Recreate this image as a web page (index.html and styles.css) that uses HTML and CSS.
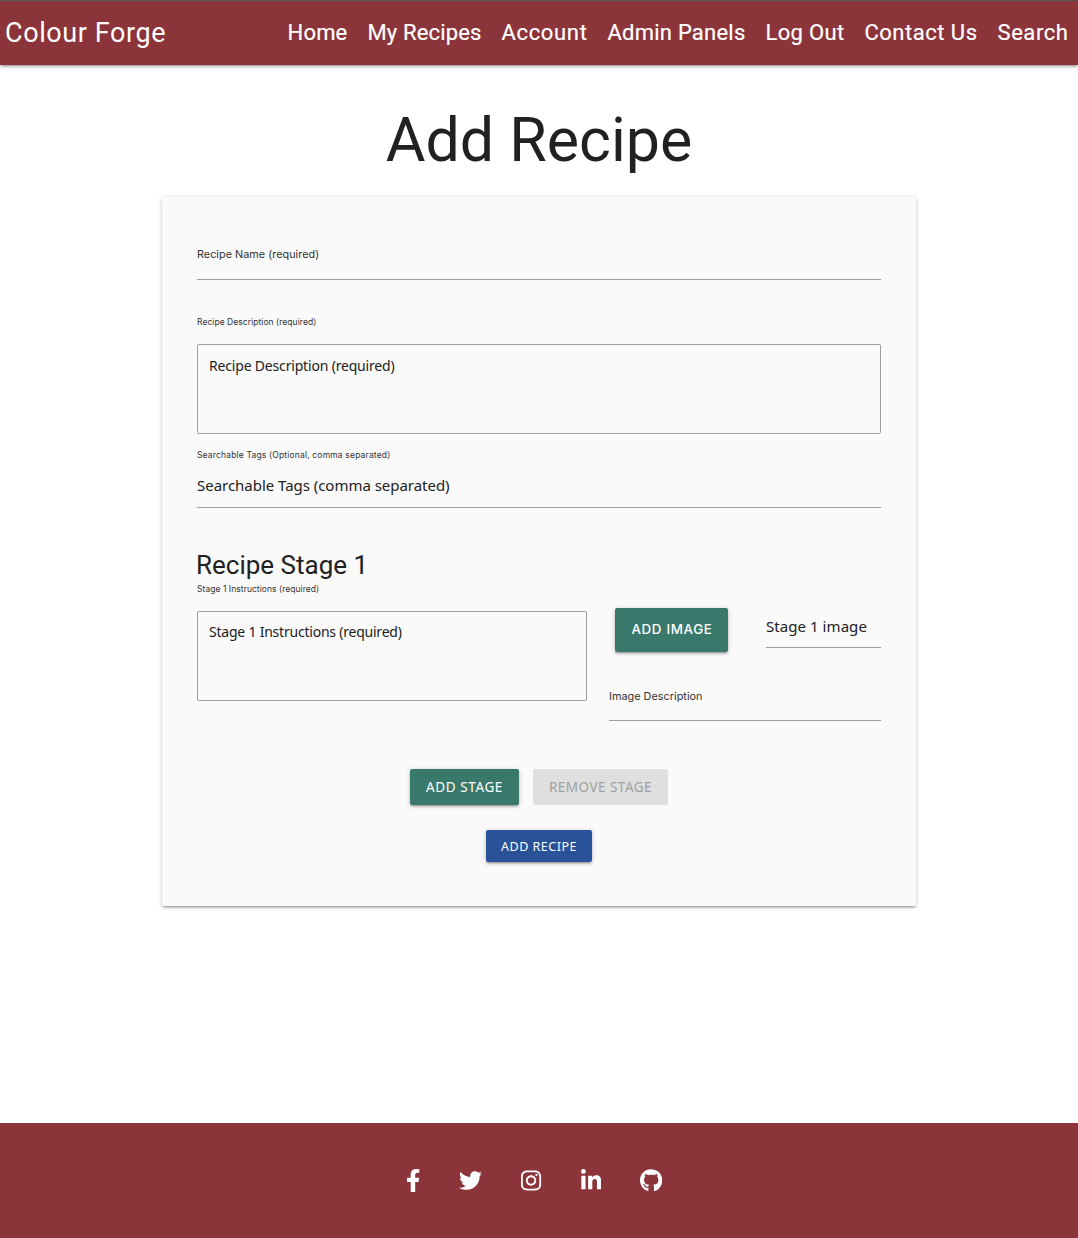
FILE: index.html
```html
<!DOCTYPE html>
<html lang="en">
<head>
<meta charset="utf-8">
<title>Colour Forge - Add Recipe</title>
<link rel="stylesheet" href="styles.css">
</head>
<body>
<header class="navbar">
  <a class="brand">Colour Forge</a>
  <nav class="nav-links">
    <a class="nav-home">Home</a>
    <a class="nav-recipes">My Recipes</a>
    <a class="nav-account">Account</a>
    <a class="nav-admin">Admin Panels</a>
    <a class="nav-logout">Log Out</a>
    <a class="nav-contact">Contact Us</a>
    <a class="nav-search">Search</a>
  </nav>
</header>
<main>
  <h1 class="page-title">Add Recipe</h1>
  <form class="card">
    <div class="field field-name"><label class="label">Recipe Name (required)</label></div>
    <label class="small-label label-desc">Recipe Description (required)</label>
    <div class="textarea textarea-desc">Recipe Description (required)</div>
    <label class="small-label label-tags">Searchable Tags (Optional, comma separated)</label>
    <div class="field field-tags">Searchable Tags (comma separated)</div>
    <h2 class="stage-title">Recipe Stage 1</h2>
    <div class="stage">
      <div class="stage-text">
        <label class="small-label label-stage">Stage 1 Instructions (required)</label>
        <div class="textarea">Stage 1 Instructions (required)</div>
      </div>
      <div class="stage-image">
        <div class="file-row">
          <button type="button" class="btn btn-file">ADD IMAGE</button>
          <div class="field field-file">Stage 1 image</div>
        </div>
        <div class="field field-alt"><label class="label">Image Description</label></div>
      </div>
    </div>
    <div class="actions">
      <button type="button" class="btn btn-add">ADD STAGE</button>
      <button type="button" class="btn btn-remove" disabled>REMOVE STAGE</button>
    </div>
    <div class="actions submit">
      <button type="button" class="btn btn-submit">ADD RECIPE</button>
    </div>
  </form>
</main>
<footer class="footer">
  <svg class="icon icon-facebook" viewBox="0 0 320 512"><path d="M279.14 288l14.22-92.66h-88.91v-60.13c0-25.35 12.42-50.06 52.24-50.06h40.42V6.26S260.43 0 225.36 0c-73.22 0-121.08 44.38-121.08 124.72v70.62H22.89V288h81.39v224h100.17V288z"/></svg>
  <svg class="icon icon-twitter" viewBox="0 0 512 512"><path d="M459.37 151.716c.325 4.548.325 9.097.325 13.645 0 138.72-105.583 298.558-298.558 298.558-59.452 0-114.68-17.219-161.137-47.106 8.447.974 16.568 1.299 25.34 1.299 49.055 0 94.213-16.568 130.274-44.832-46.132-.975-84.792-31.188-98.112-72.772 6.498.974 12.995 1.624 19.818 1.624 9.421 0 18.843-1.3 27.614-3.573-48.081-9.747-84.143-51.98-84.143-102.985v-1.299c13.969 7.797 30.214 12.67 47.431 13.319-28.264-18.843-46.781-51.005-46.781-87.391 0-19.492 5.197-37.36 14.294-52.954 51.655 63.675 129.3 105.258 216.365 109.807-1.624-7.797-2.599-15.918-2.599-24.04 0-57.828 46.782-104.934 104.934-104.934 30.213 0 57.502 12.67 76.67 33.137 23.715-4.548 46.456-13.32 66.599-25.34-7.798 24.366-24.366 44.833-46.132 57.827 21.117-2.273 41.584-8.122 60.426-16.243-14.292 20.791-32.161 39.308-52.628 54.253z"/></svg>
  <svg class="icon icon-instagram" viewBox="0 0 448 512"><path d="M224.1 141c-63.6 0-114.9 51.3-114.9 114.9s51.3 114.9 114.9 114.9S339 319.5 339 255.9 287.7 141 224.1 141zm0 189.6c-41.1 0-74.7-33.5-74.7-74.7s33.5-74.7 74.7-74.7 74.7 33.5 74.7 74.7-33.6 74.7-74.7 74.7zm146.4-194.3c0 14.9-12 26.8-26.8 26.8-14.9 0-26.8-12-26.8-26.8s12-26.8 26.8-26.8 26.8 12 26.8 26.8zm76.1 27.2c-1.7-35.9-9.9-67.7-36.2-93.9-26.2-26.2-58-34.4-93.9-36.2-37-2.1-147.9-2.1-184.9 0-35.8 1.7-67.6 9.9-93.9 36.1s-34.4 58-36.2 93.9c-2.1 37-2.1 147.9 0 184.9 1.7 35.9 9.9 67.7 36.2 93.9s58 34.4 93.9 36.2c37 2.1 147.9 2.1 184.9 0 35.9-1.7 67.7-9.9 93.9-36.2 26.2-26.2 34.4-58 36.2-93.9 2.1-37 2.1-147.8 0-184.8zM398.8 388c-7.8 19.6-22.9 34.7-42.6 42.6-29.5 11.7-99.5 9-132.1 9s-102.7 2.6-132.1-9c-19.6-7.8-34.7-22.9-42.6-42.6-11.7-29.5-9-99.5-9-132.1s-2.6-102.7 9-132.1c7.8-19.6 22.9-34.7 42.6-42.6 29.5-11.7 99.5-9 132.1-9s102.7-2.6 132.1 9c19.6 7.8 34.7 22.9 42.6 42.6 11.7 29.5 9 99.5 9 132.1s2.7 102.7-9 132.1z"/></svg>
  <svg class="icon icon-linkedin" viewBox="0 0 448 512"><path d="M100.28 448H7.4V148.9h92.88zM53.79 108.1C24.09 108.1 0 83.5 0 53.8a53.79 53.79 0 0 1 107.58 0c0 29.7-24.1 54.3-53.79 54.3zM447.9 448h-92.68V302.4c0-34.7-.7-79.2-48.29-79.2-48.29 0-55.69 37.7-55.69 76.7V448h-92.78V148.9h89.08v40.8h1.3c12.4-23.5 42.69-48.3 87.88-48.3 94 0 111.28 61.9 111.28 142.3V448z"/></svg>
  <svg class="icon icon-github" viewBox="0 0 496 512"><path d="M165.9 397.4c0 2-2.3 3.6-5.2 3.6-3.3.3-5.6-1.3-5.6-3.6 0-2 2.3-3.6 5.2-3.6 3-.3 5.6 1.3 5.6 3.6zm-31.1-4.5c-.7 2 1.3 4.3 4.3 4.9 2.6 1 5.6 0 6.2-2s-1.3-4.3-4.3-5.2c-2.6-.7-5.5.3-6.2 2.3zm44.2-1.7c-2.9.7-4.9 2.6-4.6 4.9.3 2 2.9 3.3 5.9 2.6 2.9-.7 4.9-2.6 4.6-4.6-.3-1.9-3-3.2-5.9-2.9zM244.8 8C106.1 8 0 113.3 0 252c0 110.9 69.8 205.8 169.5 239.2 12.8 2.3 17.3-5.6 17.3-12.1 0-6.2-.3-40.4-.3-61.4 0 0-70 15-84.7-29.8 0 0-11.4-29.1-27.8-36.6 0 0-22.9-15.7 1.6-15.4 0 0 24.9 2 38.6 25.8 21.9 38.6 58.6 27.5 72.9 20.9 2.3-16 8.8-27.1 16-33.7-55.9-6.2-112.3-14.3-112.3-110.5 0-27.5 7.6-41.3 23.6-58.9-2.6-6.5-11.1-33.3 2.6-67.9 20.9-6.5 69 27 69 27 20-5.6 41.5-8.5 62.8-8.5s42.8 2.9 62.8 8.5c0 0 48.1-33.6 69-27 13.7 34.7 5.2 61.4 2.6 67.9 16 17.7 25.8 31.5 25.8 58.9 0 96.5-58.9 104.2-114.8 110.5 9.2 7.9 17 22.9 17 46.4 0 33.7-.3 75.4-.3 83.6 0 6.5 4.6 14.4 17.3 12.1C428.2 457.8 496 362.9 496 252 496 113.3 383.5 8 244.8 8z"/></svg>
</footer>
</body>
</html>
```
FILE: styles.css
```css
* { box-sizing: border-box; }

body {
  margin: 0;
  min-height: 1238px;
  display: flex;
  flex-direction: column;
  background: #fff;
  color: #212121;
  font-family: "Noto Sans", sans-serif;
  font-size: 15px;
}

/* Header */
.navbar {
  height: 65px;
  border-top: 1px solid #555;
  background: #8b343a;
  color: #fff;
  display: flex;
  justify-content: space-between;
  align-items: center;
  padding: 0 9.5px 1px 5px;
  font-family: Roboto, sans-serif;
  font-size: 22px;
  box-shadow: 0 2px 2px 0 rgba(0,0,0,.14), 0 3px 1px -2px rgba(0,0,0,.12), 0 1px 5px 0 rgba(0,0,0,.2);
}
.brand { font-size: 27px; letter-spacing: .6px; }
.nav-links { display: flex; gap: 20px; white-space: nowrap; padding-bottom: 1px; -webkit-text-stroke: .2px #fff; }
.nav-home { letter-spacing: .2px; }
.nav-recipes { letter-spacing: .145px; }
.nav-account { letter-spacing: .656px; }
.nav-admin { letter-spacing: .228px; }
.nav-logout { letter-spacing: .333px; }
.nav-contact { letter-spacing: .502px; }
.nav-search { letter-spacing: .568px; }

.page-title {
  margin: 42px 0 23px;
  text-align: center;
  font: 400 60.9px/67px Roboto, sans-serif;
}

/* Form card */
.card {
  width: 754px;
  margin: 0 auto;
  padding: 42px 35px 44px;
  background: #fafafa;
  border-radius: 2px;
  box-shadow: 0 2px 2px 0 rgba(0,0,0,.14), 0 3px 1px -2px rgba(0,0,0,.12), 0 1px 5px 0 rgba(0,0,0,.2);
}
.field { border-bottom: 1px solid #9e9e9e; line-height: 20px; white-space: nowrap; }
.label {
  display: block;
  font: 10.8px/30px Inter, sans-serif;
  letter-spacing: .04px;
  color: #333;
}
.small-label {
  display: block;
  font: 8.5px/20px Inter, sans-serif;
  letter-spacing: .05px;
  color: #333;
}
.field-name { padding: 1px 0 9px; }
.label-desc { margin-top: 32px; }
.label-tags { margin-top: 11px; letter-spacing: .17px; }
.field-tags { margin-top: 10px; padding-bottom: 12px; letter-spacing: -.03px; }
.textarea {
  height: 90px;
  margin-top: 12px;
  border: 1px solid #9e9e9e;
  border-radius: 2px;
  padding: 10px 11px;
  font-size: 14px;
  line-height: 20px;
  letter-spacing: -.22px;
}
.textarea-desc { padding-top: 11px; letter-spacing: -.18px; }

.stage-title { margin: 43px 0 0; font: 400 26px/29px Roboto, sans-serif; text-indent: -1px; }
.stage { display: grid; grid-template-columns: 390px 272px; gap: 22px; margin-top: -1px; }
.stage-image { padding-top: 29px; }
.file-row { display: flex; justify-content: space-between; align-items: flex-start; padding-left: 6px; }
.field-file { width: 115px; padding: 8px 0 11px; letter-spacing: .06px; }
.field-alt { margin-top: 30px; padding-bottom: 8px; }

/* Buttons */
.btn {
  border: 0;
  border-radius: 2px;
  padding: 0;
  height: 36px;
  background: #39796b;
  color: #fff;
  font: 13.5px "Noto Sans", sans-serif;
  box-shadow: 0 2px 2px 0 rgba(0,0,0,.14), 0 3px 1px -2px rgba(0,0,0,.12), 0 1px 5px 0 rgba(0,0,0,.2);
}
.btn-file { width: 113px; height: 44px; padding: 0 0 2px 1px; font: 500 13.4px Inter, sans-serif; letter-spacing: .65px; }
.btn-add { width: 109px; letter-spacing: .6px; }
.btn-remove { width: 135px; background: #dfdfdf; color: #9f9f9f; letter-spacing: .48px; box-shadow: none; }
.btn-submit { width: 106px; height: 32px; background: #2a5298; font-size: 12.5px; letter-spacing: .5px; }
.actions { display: flex; justify-content: center; gap: 14px; margin-top: 48px; }
.submit { margin-top: 25px; }

/* Footer */
.footer {
  height: 115px;
  margin-top: auto;
  background: #8b343a;
  display: flex;
  justify-content: center;
  align-items: center;
  gap: 39px;
  padding: 0 10px 1px 0;
}
.icon { height: 23px; fill: #fff; }
```
